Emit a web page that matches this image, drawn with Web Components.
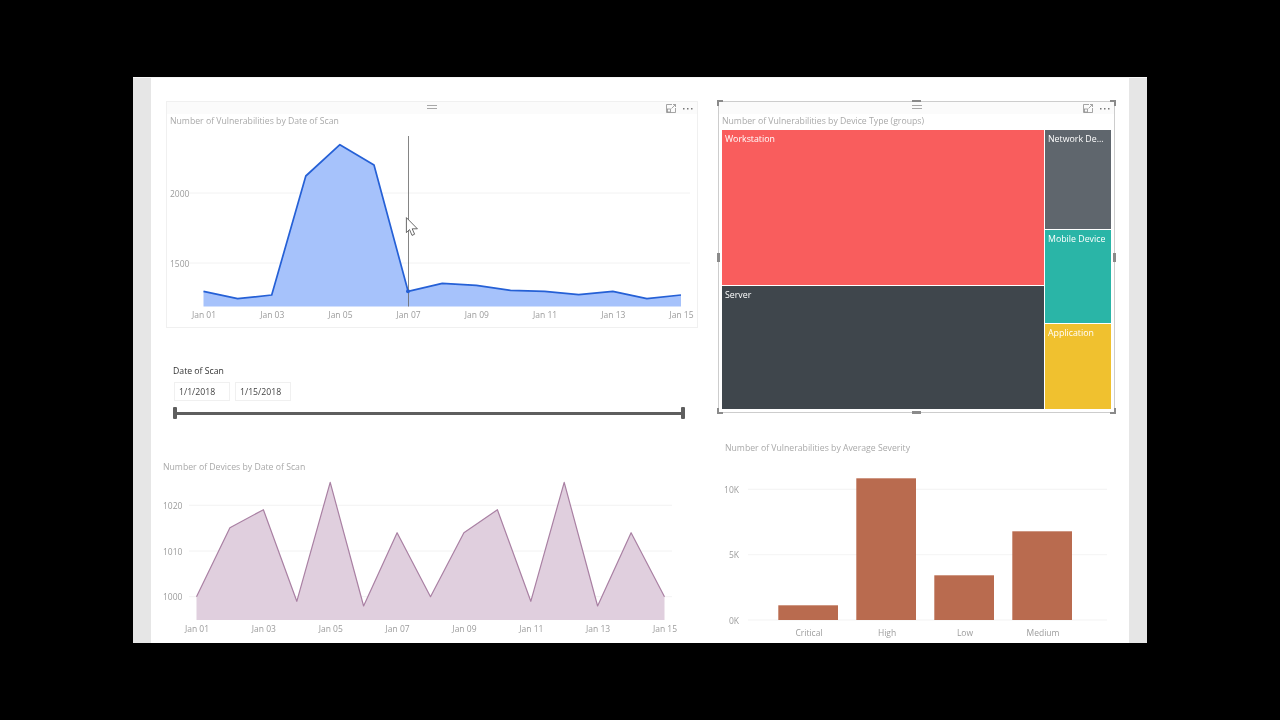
<!DOCTYPE html>
<html>
<head>
<meta charset="utf-8">
<title>Vulnerabilities report</title>
<style>
    html, body { margin: 0; height: 100%; background: #000; overflow: hidden; }
    body { font-family: "Open Sans", "Liberation Sans", sans-serif; }
</style>
</head>
<body>
<report-frame>
    <div slot="left">
        <visual-card card-title="Number of Vulnerabilities by Date of Scan">
            <area-chart view="167 128 530 199" x0="203.5" x1="681" base="306.5" grid-from="189" grid-to="690"
                label-x="170" tick-y="314" stroke="#2560d6" line-width="1.7" fill="#a6c2fb"
                points="291.3 298.7 295 176 144.7 165 291.3 283.3 285.3 290.3 291.3 294.7 291.3 298.7 295"
                grids="193:2000 263:1500" hover="408.5"></area-chart>
        </visual-card>
        <date-slicer label="Date of Scan" from="1/1/2018" to="1/15/2018"></date-slicer>
        <plain-visual card-title="Number of Devices by Date of Scan" pad="12" gap="41">
            <area-chart view="151 474 568 168" x0="196.5" x1="664.5" base="620" grid-from="189" grid-to="672"
                label-x="163" tick-y="628" stroke="#a980a3" line-width="1.2" fill="#e0cfde"
                points="596.7 527.7 509.7 601.3 482.3 606 532.7 596.7 532.7 509.7 601.3 482.3 606 532.7 596.7"
                grids="505.3:1020 551:1010 596.7:1000"></area-chart>
        </plain-visual>
    </div>
    <div slot="right">
        <visual-card selected card-title="Number of Vulnerabilities by Device Type (groups)">
            <tree-map></tree-map>
        </visual-card>
        <plain-visual card-title="Number of Vulnerabilities by Average Severity" pad="7" gap="28">
            <bar-chart view="718 455 411 187"></bar-chart>
        </plain-visual>
    </div>
</report-frame>

<script>
const UI_FONT = '"Open Sans", "Liberation Sans", sans-serif';

class ReportFrame extends HTMLElement {
    constructor() {
        super();
        const shadow = this.attachShadow({ mode: 'open' });
        shadow.innerHTML = `
            <style>
                :host {
                    display: block;
                    padding: 77px 133px 0;
                }
                .window {
                    display: grid;
                    grid-template-columns: 18px 1fr 18px;
                    height: 566px;
                    overflow: hidden;
                    background: #fff;
                    border-top: 1px solid #f6f6f6;
                    box-sizing: border-box;
                    filter: blur(0.3px); /* the reference is a soft video frame */
                }
                .rail { background: #e6e6e6; }
                .canvas {
                    display: grid;
                    grid-template-columns: 567px 1fr;
                    overflow: hidden;
                }
            </style>
            <div class="window">
                <div class="rail"></div>
                <div class="canvas">
                    <slot name="left"></slot>
                    <slot name="right"></slot>
                </div>
                <div class="rail"></div>
            </div>
        `;
    }
}

class VisualCard extends HTMLElement {
    constructor() {
        super();
        const shadow = this.attachShadow({ mode: 'open' });
        const selected = this.hasAttribute('selected');
        // the selected card sits flush with its column, the other one is inset
        shadow.innerHTML = `
            <style>
                :host {
                    display: block;
                    position: relative;
                    box-sizing: border-box;
                    margin: 23px 0 0 ${selected ? 0 : 15}px;
                    width: ${selected ? 397 : 532}px;
                    height: ${selected ? 312 : 227}px;
                    border: 1px solid ${selected ? '#cdcdcd' : '#f0f0f0'};
                    font-family: ${UI_FONT};
                }
                .head {
                    display: grid;
                    grid-template-columns: 1fr auto 1fr;
                    align-items: center;
                    height: 12px;
                    background: #fbfbfb;
                }
                .grip {
                    grid-column: 2;
                    width: 10px;
                    height: 2px;
                    margin-top: -2px;
                    border-top: 1px solid #a8a8a8;
                    border-bottom: 1px solid #a8a8a8;
                }
                .tools {
                    display: flex;
                    justify-content: flex-end;
                    align-items: center;
                    gap: 7px;
                    padding-right: 4px;
                }
                svg { display: block; }
                .title {
                    height: 14px;
                    line-height: 14px;
                    padding-left: 3px;
                    font-size: 8.7px;
                    color: #a9a9a9;
                    white-space: nowrap;
                }
                .handle { position: absolute; background: #8a8a8a; }
            </style>
            <div class="head">
                <div class="grip"></div>
                <div class="tools">
                    <svg width="10" height="9" viewBox="0 0 10 9" fill="none" stroke="#8f8f8f" stroke-width="0.8">
                        <path d="M6 .5H.5v8h9V4"/><path d="M5.5 4.5 9.5 .5M7 .5h2.5V3"/><rect x="1.5" y="5" width="3" height="3"/>
                    </svg>
                    <svg width="10" height="3" viewBox="0 0 10 3" fill="#777">
                        <rect x="0" y="1" width="1.5" height="1.5"/><rect x="4" y="1" width="1.5" height="1.5"/><rect x="8" y="1" width="1.5" height="1.5"/>
                    </svg>
                </div>
            </div>
            <div class="title">${this.getAttribute('card-title')}</div>
            <slot></slot>
            ${selected ? VisualCard.handles() : ''}
        `;
    }

    static handles() {
        const corners = [
            'left:-2px;top:-2px;width:6px;height:2px', 'left:-2px;top:-2px;width:2px;height:6px',
            'right:-2px;top:-2px;width:6px;height:2px', 'right:-2px;top:-2px;width:2px;height:6px',
            'left:-2px;bottom:-2px;width:6px;height:2px', 'left:-2px;bottom:-2px;width:2px;height:6px',
            'right:-2px;bottom:-2px;width:6px;height:2px', 'right:-2px;bottom:-2px;width:2px;height:6px',
            'left:-2px;top:151px;width:3px;height:9px', 'right:-2px;top:151px;width:3px;height:9px',
            'left:193px;bottom:-2px;width:9px;height:3px', 'left:193px;top:-2px;width:9px;height:2px'
        ];
        return corners.map(c => `<div class="handle" style="${c}"></div>`).join('');
    }
}

class PlainVisual extends HTMLElement {
    constructor() {
        super();
        const shadow = this.attachShadow({ mode: 'open' });
        shadow.innerHTML = `
            <style>
                :host {
                    display: block;
                    margin-top: ${this.getAttribute('gap')}px;
                    font-family: ${UI_FONT};
                }
                .title {
                    height: 14px;
                    line-height: 14px;
                    padding-left: ${this.getAttribute('pad')}px;
                    font-size: 8.7px;
                    color: #a9a9a9;
                    white-space: nowrap;
                }
            </style>
            <div class="title">${this.getAttribute('card-title')}</div>
            <slot></slot>
        `;
    }
}

class AreaChart extends HTMLElement {
    constructor() {
        super();
        const shadow = this.attachShadow({ mode: 'open' });
        const attr = name => this.getAttribute(name);
        const num = name => parseFloat(attr(name));
        const [vx, vy, vw, vh] = attr('view').split(' ').map(Number);
        const ys = attr('points').split(' ').map(Number);
        const x0 = num('x0');
        const step = (num('x1') - x0) / (ys.length - 1);
        const base = num('base');
        const line = ys.map((y, i) => `${(x0 + i * step).toFixed(1)},${y}`).join(' ');

        const grids = attr('grids').split(' ').map(g => {
            const [y, label] = g.split(':');
            return `<line x1="${attr('grid-from')}" x2="${attr('grid-to')}" y1="${y}" y2="${y}" stroke="#efefef" stroke-width="0.8"/>
                <text x="${attr('label-x')}" y="${y}" class="axis" dominant-baseline="central">${label}</text>`;
        }).join('');

        let ticks = '';
        for (let i = 0; i < ys.length; i += 2) {
            const day = String(i + 1).padStart(2, '0');
            ticks += `<text x="${x0 + 0.5 + i * step}" y="${attr('tick-y')}" class="axis" text-anchor="middle" dominant-baseline="central">Jan ${day}</text>`;
        }

        let hover = '';
        if (attr('hover')) {
            const hx = num('hover');
            hover = `
                <line x1="${hx}" x2="${hx}" y1="136" y2="${base}" stroke="#666" stroke-width="0.8"/>
                <circle cx="${hx - 0.5}" cy="291.3" r="2" fill="${attr('stroke')}"/>
                <path d="M406.4 217.6V232.6L409.6 229.6 412 235.4 414.6 234.2 412.2 228.8H417.4Z" fill="#fff" stroke="#444" stroke-width="0.8" stroke-linejoin="round"/>
            `;
        }

        shadow.innerHTML = `
            <style>
                :host { display: block; }
                svg { display: block; }
                .axis { font-size: 8.5px; fill: #9c9c9c; font-family: ${UI_FONT}; }
            </style>
            <svg width="${vw}" height="${vh}" viewBox="${vx} ${vy} ${vw} ${vh}">
                ${grids}
                <polygon points="${x0},${base} ${line} ${x0 + step * (ys.length - 1)},${base}" fill="${attr('fill')}"/>
                <polyline points="${line}" fill="none" stroke="${attr('stroke')}" stroke-width="${attr('line-width')}" stroke-linejoin="round"/>
                ${ticks}
                ${hover}
            </svg>
        `;
    }
}

class TreeMap extends HTMLElement {
    constructor() {
        super();
        const shadow = this.attachShadow({ mode: 'open' });
        shadow.innerHTML = `
            <style>
                :host {
                    display: grid;
                    grid-template-columns: 322px 66px;
                    column-gap: 1px;
                    margin: 2px 0 0 3px;
                    width: 389px;
                    height: 279px;
                    font-size: 8.8px;
                    color: #fff;
                }
                .col { display: flex; flex-direction: column; gap: 1px; }
                .tile {
                    box-sizing: border-box;
                    padding: 3px 0 0 3px;
                    line-height: 13px;
                    white-space: nowrap;
                    overflow: hidden;
                }
            </style>
            <div class="col">
                <div class="tile" style="height:155px;background:#f95d5d">Workstation</div>
                <div class="tile" style="flex:1;background:#3f464c">Server</div>
            </div>
            <div class="col">
                <div class="tile" style="height:99px;background:#5f666d">Network De...</div>
                <div class="tile" style="height:93px;background:#2ab5a7">Mobile Device</div>
                <div class="tile" style="flex:1;background:#f0c12f">Application</div>
            </div>
        `;
    }
}

class DateSlicer extends HTMLElement {
    constructor() {
        super();
        const shadow = this.attachShadow({ mode: 'open' });
        shadow.innerHTML = `
            <style>
                :host {
                    display: block;
                    margin: 36px 0 0 22px;
                    width: 512px;
                    font-family: ${UI_FONT};
                    font-size: 8.7px;
                    color: #333;
                }
                .label { height: 14px; line-height: 14px; }
                .inputs { display: flex; gap: 5px; margin: 4px 0 0 1px; }
                .box {
                    box-sizing: border-box;
                    width: 56px;
                    height: 19px;
                    line-height: 18px;
                    padding-left: 4px;
                    border: 1px solid #f0f0f0;
                    color: #444;
                }
                .slider {
                    display: flex;
                    justify-content: space-between;
                    align-items: stretch;
                    position: relative;
                    height: 12px;
                    margin-top: 6px;
                }
                .slider::before {
                    content: "";
                    position: absolute;
                    left: 0;
                    right: 0;
                    top: 5px;
                    height: 2.5px;
                    background: #5e5e5e;
                }
                .knob { width: 4px; background: #5e5e5e; border-radius: 1px; position: relative; }
            </style>
            <div class="label">${this.getAttribute('label')}</div>
            <div class="inputs">
                <div class="box">${this.getAttribute('from')}</div>
                <div class="box">${this.getAttribute('to')}</div>
            </div>
            <div class="slider"><div class="knob"></div><div class="knob"></div></div>
        `;
    }
}

class BarChart extends HTMLElement {
    constructor() {
        super();
        const shadow = this.attachShadow({ mode: 'open' });
        const [vx, vy, vw, vh] = this.getAttribute('view').split(' ').map(Number);
        const bars = [
            ['Critical', 778.3, 605.3, 809],
            ['High', 856.3, 478.3, 887],
            ['Low', 934.3, 575.3, 965],
            ['Medium', 1012.3, 531.3, 1043]
        ];
        const grids = [[489.3, '10K'], [554.7, '5K'], [620, '0K']];
        shadow.innerHTML = `
            <style>
                :host { display: block; }
                svg { display: block; }
                .axis { font-size: 8.5px; fill: #9c9c9c; font-family: ${UI_FONT}; }
            </style>
            <svg width="${vw}" height="${vh}" viewBox="${vx} ${vy} ${vw} ${vh}">
                ${grids.map(([y, label]) => `
                    <line x1="748" x2="1107" y1="${y}" y2="${y}" stroke="#f0f0f0" stroke-width="0.8"/>
                    <text x="739" y="${y}" class="axis" text-anchor="end" dominant-baseline="central">${label}</text>
                `).join('')}
                ${bars.map(([label, x, top, cx]) => `
                    <rect x="${x}" y="${top}" width="59.7" height="${620 - top}" fill="#b96b4f"/>
                    <text x="${cx}" y="632.7" class="axis" text-anchor="middle" dominant-baseline="central">${label}</text>
                `).join('')}
            </svg>
        `;
    }
}

customElements.define('report-frame', ReportFrame);
customElements.define('visual-card', VisualCard);
customElements.define('plain-visual', PlainVisual);
customElements.define('area-chart', AreaChart);
customElements.define('tree-map', TreeMap);
customElements.define('date-slicer', DateSlicer);
customElements.define('bar-chart', BarChart);
</script>
</body>
</html>
